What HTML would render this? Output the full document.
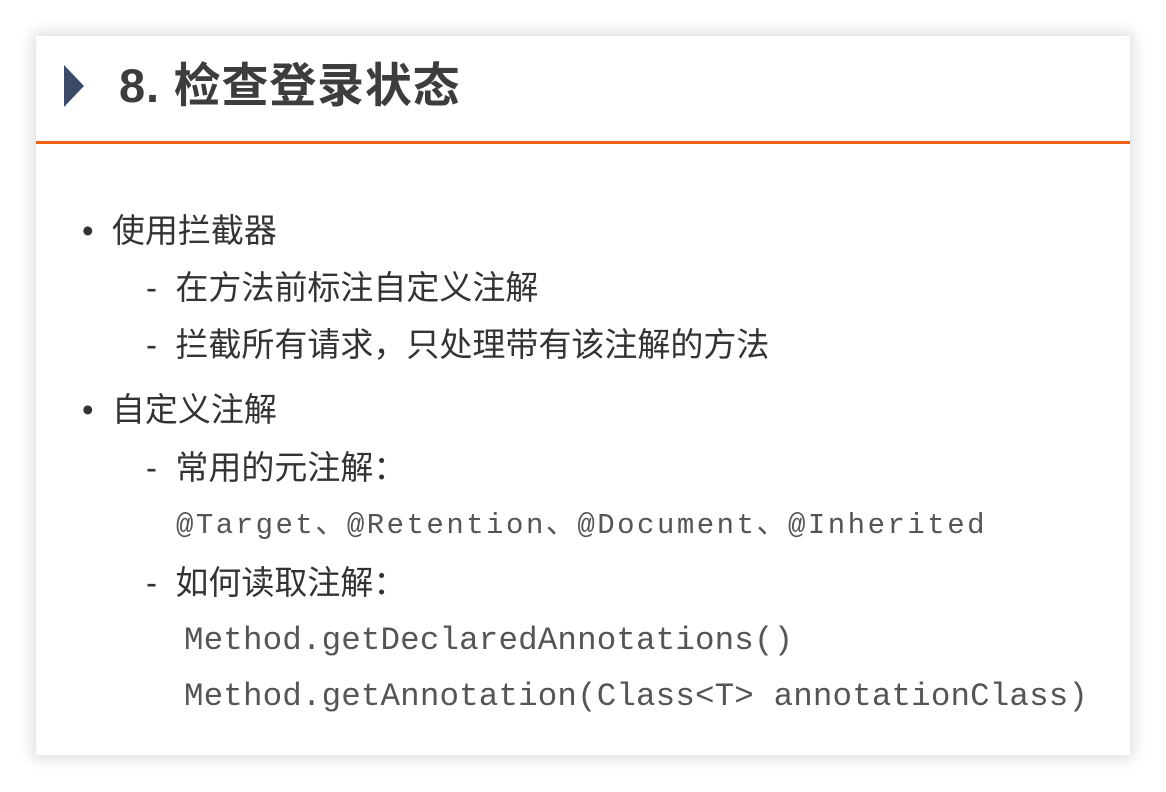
<!DOCTYPE html>
<html><head><meta charset="utf-8"><style>
body{margin:0;width:1166px;height:792px;background:#fff;overflow:hidden;position:relative;font-family:"Liberation Sans","Noto Sans CJK SC",sans-serif;}
.card{position:absolute;left:36px;top:36px;width:1094px;height:719px;background:#fff;box-shadow:0 0 14px 4px rgba(0,0,0,0.13);}
.tri{position:absolute;left:64px;top:65px;width:0;height:0;border-top:21px solid transparent;border-bottom:21px solid transparent;border-left:20px solid #3b4a66;}
.title{position:absolute;left:119px;top:56px;font-size:47px;font-weight:bold;color:#3d3d3d;line-height:60px;letter-spacing:0.8px;}
.line{position:absolute;left:36px;top:141px;width:1094px;height:3px;background:#ee6415;}
.t{position:absolute;font-size:33px;color:#333;line-height:40px;white-space:nowrap;}
.m{position:absolute;font-family:"Liberation Mono","Noto Sans CJK SC",monospace;font-size:32.5px;color:#555;line-height:40px;white-space:nowrap;letter-spacing:0.15px;}
</style></head><body>
<div class="card"></div>
<div class="tri"></div>
<div class="title">8. 检查登录状态</div>
<div class="line"></div>
<div class="t" style="left:82px;top:211px">•&nbsp;&nbsp;使用拦截器</div>
<div class="t" style="left:146px;top:268px">-&nbsp;&nbsp;在方法前标注自定义注解</div>
<div class="t" style="left:146px;top:325px">-&nbsp;&nbsp;拦截所有请求，只处理带有该注解的方法</div>
<div class="t" style="left:82px;top:390px">•&nbsp;&nbsp;自定义注解</div>
<div class="t" style="left:146px;top:448px">-&nbsp;&nbsp;常用的元注解：</div>
<div class="m" style="left:176px;top:506px;font-size:29px;letter-spacing:2.5px">@Target、@Retention、@Document、@Inherited</div>
<div class="t" style="left:146px;top:563px">-&nbsp;&nbsp;如何读取注解：</div>
<div class="m" style="left:184px;top:621px">Method.getDeclaredAnnotations()</div>
<div class="m" style="left:184px;top:677px">Method.getAnnotation(Class&lt;T&gt; annotationClass)</div>
</body></html>
